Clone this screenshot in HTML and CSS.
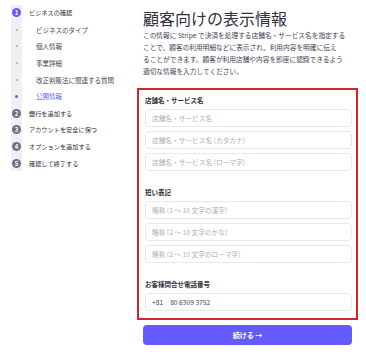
FILE: index.html
```html
<!DOCTYPE html>
<html>
<head>
    <title>顧客向けの表示情報</title>
    <link rel="stylesheet" href="styles.css">
</head>
<body>
    <div class="page">
        <nav class="steps">
            <div class="step current"><span class="marker"><span class="circle">1</span></span><span class="label">ビジネスの確認</span></div>
            <div class="step sub"><span class="marker"><span class="dot"></span></span><span class="label">ビジネスのタイプ</span></div>
            <div class="step sub"><span class="marker"><span class="dot"></span></span><span class="label">個人情報</span></div>
            <div class="step sub"><span class="marker"><span class="dot"></span></span><span class="label">事業詳細</span></div>
            <div class="step sub"><span class="marker"><span class="dot"></span></span><span class="label">改正割販法に関連する質問</span></div>
            <div class="step sub active"><span class="marker"><span class="dot"></span></span><span class="label">公開情報</span></div>
            <div class="step"><span class="marker"><span class="circle">2</span></span><span class="label">銀行を追加する</span></div>
            <div class="step"><span class="marker"><span class="circle">3</span></span><span class="label">アカウントを安全に保つ</span></div>
            <div class="step"><span class="marker"><span class="circle">4</span></span><span class="label">オプションを追加する</span></div>
            <div class="step"><span class="marker"><span class="circle">5</span></span><span class="label">確認して終了する</span></div>
        </nav>

        <main class="content">
            <h1>顧客向けの表示情報</h1>
            <p class="intro">この情報に Stripe で決済を処理する店舗名・サービス名を指定する<br>ことで、顧客の利用明細などに表示され、利用内容を明確に伝え<br>ることができます。顧客が利用店舗や内容を即座に認識できるよう<br>適切な情報を入力してください。</p>

            <div class="form-box">
                <div class="field-group">
                    <label>店舗名・サービス名</label>
                    <input type="text" placeholder="店舗名・サービス名">
                    <input type="text" placeholder="店舗名・サービス名 (カタカナ)">
                    <input type="text" placeholder="店舗名・サービス名 (ローマ字)">
                </div>
                <div class="field-group">
                    <label>短い表記</label>
                    <input type="text" placeholder="略称 (1 〜 10 文字の漢字)">
                    <input type="text" placeholder="略称 (2 〜 10 文字のかな)">
                    <input type="text" placeholder="略称 (2 〜 10 文字のローマ字)">
                </div>
                <div class="field-group">
                    <label>お客様問合せ電話番号</label>
                    <div class="phone">
                        <span class="prefix">+81</span>
                        <input type="text" value="80 6309 3752">
                    </div>
                </div>
            </div>

            <button class="continue">続ける →</button>
        </main>
    </div>
</body>
</html>
```

FILE: styles.css
```css
body {
    margin: 0;
    font-family: "Noto Sans CJK JP", "Noto Sans", sans-serif;
    color: #30313d;
    background-color: #fff;
}

.page {
    display: flex;
}

/* left step list */
.steps {
    width: 132px;
    flex-shrink: 0;
    padding: 4.6px 0 0 11px;
}

.step {
    display: flex;
    align-items: center;
    height: 16.7px;
}

.marker {
    width: 11px;
    align-self: stretch;
    background-color: #eff0f4;
    display: flex;
    align-items: center;
    justify-content: center;
}

.circle {
    width: 9px;
    height: 9px;
    border-radius: 50%;
    background-color: #687385;
    color: #fff;
    font-size: 6px;
    font-weight: 700;
    line-height: 9px;
    text-align: center;
}

.current .circle {
    background-color: #635bff;
}

.dot {
    width: 2px;
    height: 2px;
    border-radius: 50%;
    background-color: #a3acb9;
}

.active .dot {
    width: 3px;
    height: 3px;
    background-color: #635bff;
}

.label {
    margin-left: 7px;
    font-size: 6.2px;
    white-space: nowrap;
}

.sub .label {
    margin-left: 14px;
    font-size: 6.5px;
    color: #414552;
}

.active .label {
    color: #635bff;
}

/* main column */
.content {
    width: 209px;
    padding-top: 8px;
}

h1 {
    margin: 0 0 1px;
    font-size: 16px;
    line-height: 20px;
    font-weight: 400;
    color: #30313d;
}

.intro {
    margin: 0 0 11px;
    font-size: 6.7px;
    line-height: 12px;
    color: #414552;
}

.form-box {
    margin: 0 -6px;
    border: 2px solid #d8232a;
    padding: 5px 4px 7px 6px;
}

.field-group {
    display: flex;
    flex-direction: column;
    gap: 4px;
}

.field-group + .field-group {
    margin-top: 16px;
}

.field-group label {
    font-size: 6.5px;
    font-weight: 700;
    line-height: 10px;
    color: #30313d;
}

input {
    height: 18px;
    box-sizing: border-box;
    border: 1px solid #e6e8ee;
    border-radius: 4px;
    padding: 0 6px;
    font-family: inherit;
    font-size: 6.7px;
    color: #414552;
    outline: none;
}

input::placeholder {
    color: #a9afba;
}

.phone {
    display: flex;
    align-items: center;
    height: 18px;
    box-sizing: border-box;
    border: 1px solid #e6e8ee;
    border-radius: 4px;
    padding-left: 6px;
    font-size: 6.7px;
    color: #414552;
}

.phone input {
    flex: 1;
    border: none;
    height: 16px;
    padding-left: 7px;
}

.continue {
    display: block;
    width: 100%;
    height: 20px;
    margin-top: 5px;
    border: none;
    border-radius: 4px;
    background-color: #635bff;
    color: #fff;
    font-family: inherit;
    font-size: 7px;
    font-weight: 700;
    cursor: pointer;
}
```
